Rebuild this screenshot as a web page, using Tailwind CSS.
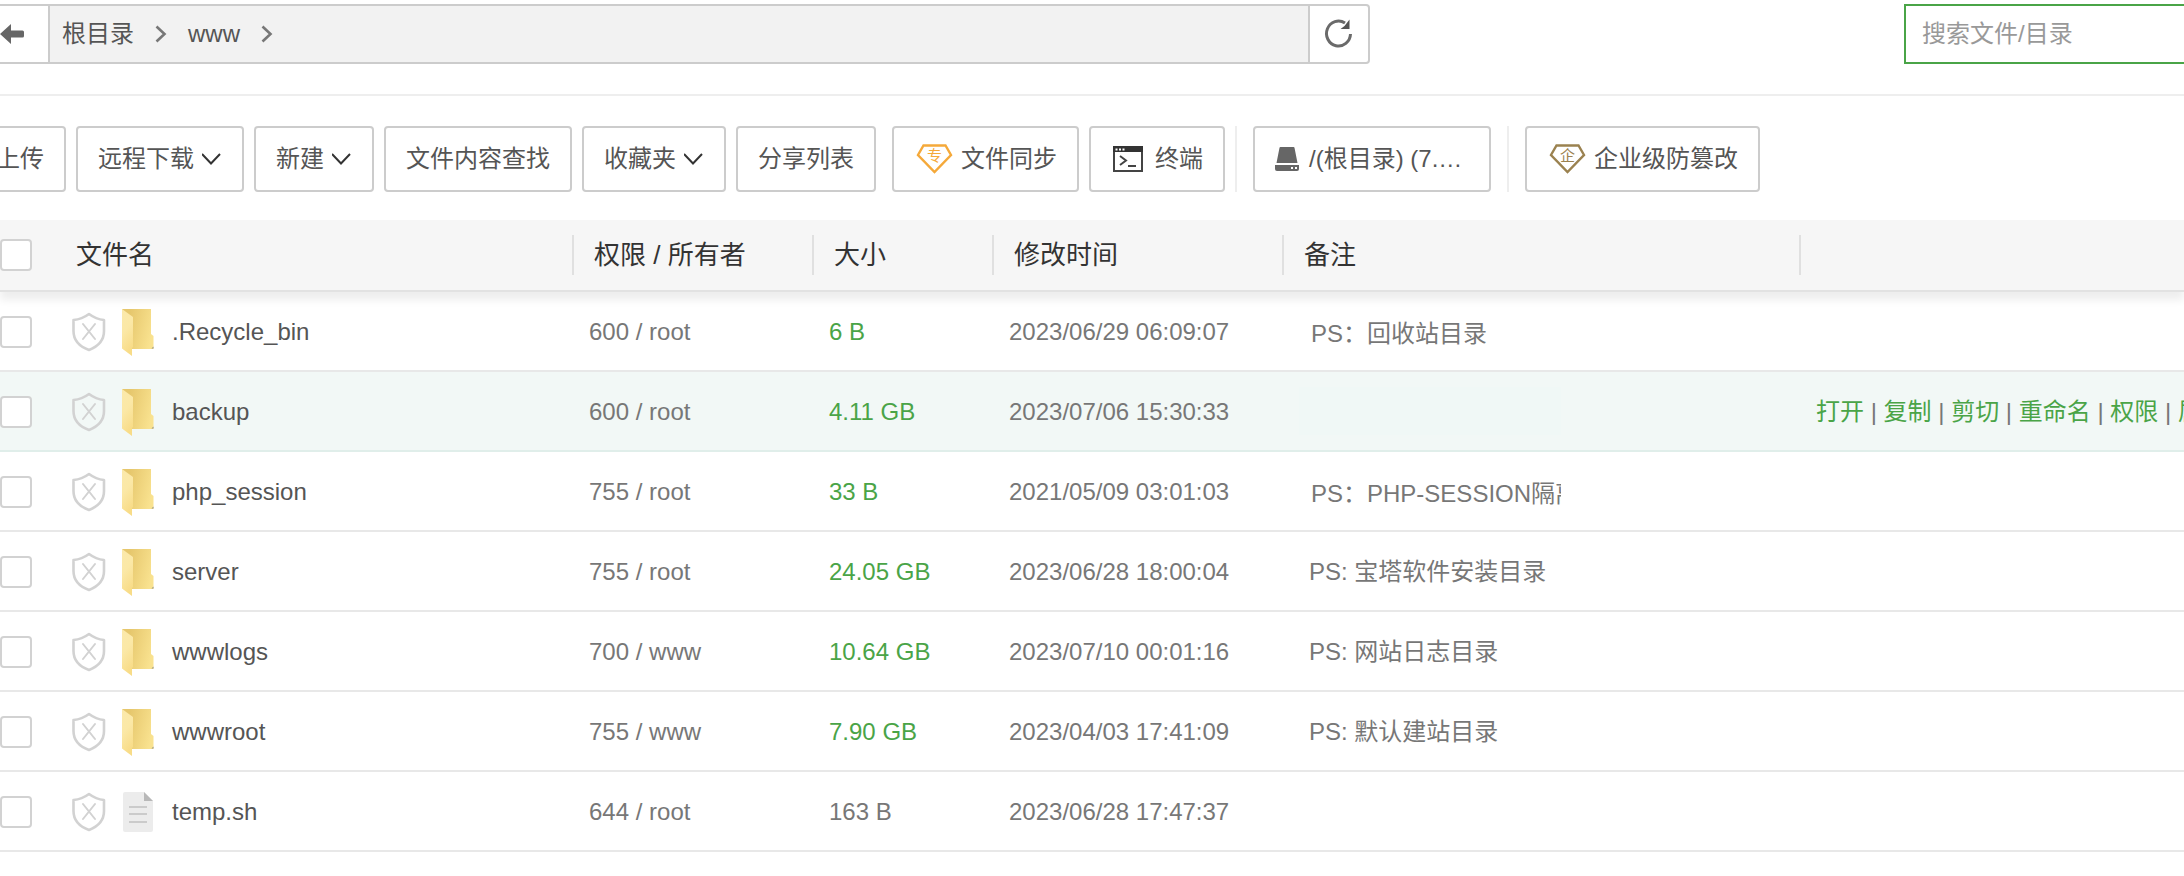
<!DOCTYPE html>
<html lang="zh-CN">

<head>
  <meta charset="UTF-8">
  <meta name="viewport" content="width=device-width, initial-scale=1.0">
  <title>文件管理</title>
  <script src="https://cdn.jsdelivr.net/npm/@tailwindcss/browser@4"></script>
</head>

<body class="overflow-x-hidden bg-white font-['Liberation_Sans','Noto_Sans_CJK_SC',sans-serif] text-2xl leading-8 text-[#555]">
  <!-- Shared icons -->
  <svg class="hidden" aria-hidden="true">
    <symbol id="icon-down" viewBox="0 0 20 12">
      <path d="M0 1l9 9.500L18 1" fill="none" stroke="#333" stroke-width="2" />
    </symbol>
    <symbol id="icon-next" viewBox="0 0 12 18">
      <path d="M1.500 1.500L9.500 9l-8 7.500" fill="none" stroke="#777" stroke-width="2.600" />
    </symbol>
    <symbol id="icon-shield" viewBox="0 0 34 40">
      <path d="M17 2C13 5 7.500 7.500 1.500 8v11c0 9 6 15.500 15.500 19 9-3.500 15-10 15-19V8C26.500 7.500 21 5 17 2z" fill="none" stroke="#d2d2d2" stroke-width="2.600" stroke-linejoin="round" />
      <path d="M11 12l12 15M23 12L11 27" fill="none" stroke="#d2d2d2" stroke-width="2" stroke-linecap="round" />
    </symbol>
    <symbol id="icon-folder" viewBox="0 0 34 48">
      <path d="M0 1h29v25l2.500 2v13H8z" fill="url(#folderBack)" />
      <path d="M0 1l11 8v30l-1 1v8L0 40.500z" fill="url(#folderFront)" />
      <path d="M29.500 40.500l2-2v2z" fill="#8d8d84" />
    </symbol>
    <symbol id="icon-file" viewBox="0 0 34 48">
      <path d="M3 4h19l9 9v29a2 2 0 0 1-2 2H3a2 2 0 0 1-2-2V6a2 2 0 0 1 2-2z" fill="#ececec" />
      <path d="M22 4l9 9h-9z" fill="#b8b8b8" />
      <path d="M7 19h18M7 26h18M7 34h18" stroke="#cbcbcb" stroke-width="2" />
    </symbol>
  </svg>
  <svg class="absolute size-0" aria-hidden="true">
    <defs>
      <linearGradient id="folderBack" x1="0" y1="0.200" x2="1" y2="0.500">
        <stop offset="0.200" stop-color="#e6c76d" />
        <stop offset="1" stop-color="#f9e28f" />
      </linearGradient>
      <linearGradient id="folderFront" x1="0" y1="0" x2="0.300" y2="1">
        <stop offset="0" stop-color="#fbe9ab" />
        <stop offset="0.500" stop-color="#fbe8a6" />
        <stop offset="1" stop-color="#f8dc88" />
      </linearGradient>
    </defs>
  </svg>

  <!-- Path bar and search -->
  <header class="flex justify-between border-b-2 border-[#eee] pt-1 pb-[30px]">
    <nav class="flex h-[60px] max-w-[1370px] flex-1 rounded-r border-2 border-l-0 border-[#ccc]" aria-label="路径">
      <button type="button" class="w-[50px] border-r-2 border-[#ccc]" aria-label="返回上一级">
        <svg class="h-5 w-6" viewBox="0 0 24 20">
          <path d="M0 10L11 0v6.500h11.500a1.500 1.500 0 0 1 1.500 1.500v4a1.500 1.500 0 0 1-1.500 1.500H11V20z" fill="#666" />
        </svg>
      </button>
      <div class="flex flex-1 items-center gap-[21px] bg-[#f2f2f2] pl-3">
        <a href="#">根目录</a>
        <svg class="h-[18px] w-3"><use href="#icon-next" /></svg>
        <a href="#">www</a>
        <svg class="h-[18px] w-3"><use href="#icon-next" /></svg>
      </div>
      <button type="button" class="flex w-[60px] items-center justify-center border-l-2 border-[#ccc]" aria-label="刷新">
        <svg class="size-8" viewBox="0 0 32 32">
          <path d="M22 5A12 12.500 0 1 0 27.500 16" fill="none" stroke="#6a6a6a" stroke-width="3" />
          <path d="M26.500 1.500v9.500h-9l4-3z" fill="#555" />
        </svg>
      </button>
    </nav>
    <input type="search" placeholder="搜索文件/目录" aria-label="搜索文件/目录" class="h-[60px] w-[280px] border-2 border-r-0 border-[#4aa447] px-4 outline-none placeholder:text-[#999]">
  </header>

  <!-- Toolbar -->
  <div class="-ml-[26px] flex gap-2.5 pt-[30px] pb-7 whitespace-nowrap">
    <button type="button" class="h-[66px] rounded border-2 border-[#ccc] px-5">上传</button>
    <button type="button" class="flex h-[66px] items-center gap-2 rounded border-2 border-[#ccc] px-5">远程下载<svg class="h-3 w-5"><use href="#icon-down" /></svg></button>
    <button type="button" class="flex h-[66px] items-center gap-2 rounded border-2 border-[#ccc] px-5">新建<svg class="h-3 w-5"><use href="#icon-down" /></svg></button>
    <button type="button" class="h-[66px] rounded border-2 border-[#ccc] px-5">文件内容查找</button>
    <button type="button" class="flex h-[66px] items-center gap-2 rounded border-2 border-[#ccc] px-5">收藏夹<svg class="h-3 w-5"><use href="#icon-down" /></svg></button>
    <button type="button" class="h-[66px] rounded border-2 border-[#ccc] px-5">分享列表</button>
    <button type="button" class="ml-1.5 flex h-[66px] items-center gap-2 rounded border-2 border-[#ccc] px-5">
      <svg class="h-[30px] w-[39px]" viewBox="0 0 39 30">
        <path d="M9.500 1.500h22L37 11 20.500 28 4 11z" fill="none" stroke="#f5a93a" stroke-width="2.400" />
        <text x="20.500" y="17" text-anchor="middle" font-size="15" fill="#f5a93a">专</text>
      </svg>
      文件同步
    </button>
    <button type="button" class="flex h-[66px] items-center gap-2 rounded border-2 border-[#ccc] px-5">
      <svg class="h-[26px] w-9" viewBox="0 0 36 26">
        <path d="M3 1h28v24H3z" fill="none" stroke="#444" stroke-width="2" />
        <path d="M2 0h30v6H2z" fill="#333" />
        <path d="M4.500 3.500h2m1.500 0h2m1.500 0h2" stroke="#fff" stroke-width="2" />
        <path d="M9 10l6 4.500L9 19M17 20h8" fill="none" stroke="#444" stroke-width="2" />
      </svg>
      终端
    </button>
    <div class="w-0.5 bg-[#eee]"></div>
    <button type="button" class="ml-1.5 flex h-[66px] w-[238px] items-center gap-2.5 rounded border-2 border-[#ccc] px-5">
      <svg class="h-6 w-6" viewBox="0 0 24 24">
        <path d="M5.500 0h13a1 1 0 0 1 1 .8L22.500 16h-21L4.500.8a1 1 0 0 1 1-.8z" fill="#666" />
        <path d="M0 18h24v4a2 2 0 0 1-2 2H2a2 2 0 0 1-2-2z" fill="#666" />
        <path d="M16 20h2v2h-2zM20 20h2v2h-2z" fill="#fff" />
      </svg>
      /(根目录) (7.…
    </button>
    <div class="ml-1.5 w-0.5 bg-[#eee]"></div>
    <button type="button" class="ml-1.5 flex h-[66px] items-center gap-2 rounded border-2 border-[#ccc] px-5">
      <svg class="h-[30px] w-[39px]" viewBox="0 0 39 30">
        <path d="M9.500 1.500h22L37 11 20.500 28 4 11z" fill="none" stroke="#9b8250" stroke-width="2.400" />
        <text x="20.500" y="17" text-anchor="middle" font-size="15" fill="#9b8250">企</text>
      </svg>
      企业级防篡改
    </button>
  </div>

  <!-- File list -->
  <table class="w-full table-fixed border-separate border-spacing-0 whitespace-nowrap">
    <colgroup>
      <col class="w-[72px]">
      <col class="w-[502px]">
      <col class="w-[240px]">
      <col class="w-[180px]">
      <col class="w-[290px]">
      <col class="w-[517px]">
      <col>
    </colgroup>
    <thead class="bg-[#f6f6f6] text-left text-[26px] text-[#333] shadow-[0_8px_8px_rgba(0,0,0,0.07)]">
      <tr class="h-[72px]">
        <th class="border-b-2 border-[#e2e2e2] font-normal">
          <input type="checkbox" aria-label="全选" class="block size-8 appearance-none rounded border-2 border-[#d2d2d2] bg-white">
        </th>
        <th class="border-b-2 border-[#e2e2e2] font-normal">
          <div class="h-10 border-r-2 border-[#e0e0e0] pl-1 leading-10">文件名</div>
        </th>
        <th class="border-b-2 border-[#e2e2e2] font-normal">
          <div class="h-10 border-r-2 border-[#e0e0e0] pl-5 leading-10">权限 / 所有者</div>
        </th>
        <th class="border-b-2 border-[#e2e2e2] font-normal">
          <div class="h-10 border-r-2 border-[#e0e0e0] pl-5 leading-10">大小</div>
        </th>
        <th class="border-b-2 border-[#e2e2e2] font-normal">
          <div class="h-10 border-r-2 border-[#e0e0e0] pl-5 leading-10">修改时间</div>
        </th>
        <th class="border-b-2 border-[#e2e2e2] font-normal">
          <div class="h-10 border-r-2 border-[#e0e0e0] pl-5 leading-10">备注</div>
        </th>
        <th class="border-b-2 border-[#e2e2e2]"></th>
      </tr>
    </thead>
    <tbody id="fileList" class="text-[#777]"></tbody>
  </table>

  <script>
    const files = [
      { name: '.Recycle_bin', icon: 'folder', access: '600 / root', size: '6 B', time: '2023/06/29 06:09:07', note: 'PS：回收站目录', editable: true },
      { name: 'backup', icon: 'folder', access: '600 / root', size: '4.11 GB', time: '2023/07/06 15:30:33', note: '', editable: true, active: true },
      { name: 'php_session', icon: 'folder', access: '755 / root', size: '33 B', time: '2021/05/09 03:01:03', note: 'PS：PHP-SESSION隔离', editable: true },
      { name: 'server', icon: 'folder', access: '755 / root', size: '24.05 GB', time: '2023/06/28 18:00:04', note: 'PS: 宝塔软件安装目录' },
      { name: 'wwwlogs', icon: 'folder', access: '700 / www', size: '10.64 GB', time: '2023/07/10 00:01:16', note: 'PS: 网站日志目录' },
      { name: 'wwwroot', icon: 'folder', access: '755 / www', size: '7.90 GB', time: '2023/04/03 17:41:09', note: 'PS: 默认建站目录' },
      { name: 'temp.sh', icon: 'file', access: '644 / root', size: '163 B', time: '2023/06/28 17:47:37', note: '' },
    ];
    const actions = ['打开', '复制', '剪切', '重命名', '权限', '属性'];

    // Folders show a green, clickable size; plain files show grey text
    function sizeCell(file) {
      return file.icon === 'folder' ? `<a href="#" class="text-[#4aa447]">${file.size}</a>` : file.size;
    }

    function noteCell(file) {
      if (file.editable) {
        const bg = file.active ? 'bg-[#f0f8f6]' : 'bg-transparent';
        return `<input type="text" value="${file.note}" aria-label="${file.name} 备注" class="block h-12 w-[262px] pl-3 ${bg}">`;
      }
      return `<span class="pl-2.5">${file.note}</span>`;
    }

    function actionCell(file) {
      if (!file.active) return '';
      return actions.map(action => `<a href="#" class="text-[#4aa447]">${action}</a>`).join(' | ');
    }

    document.getElementById('fileList').innerHTML = files.map(file => {
      const border = file.active ? 'border-[#e0eeea]' : 'border-[#e8e8e8]';
      // The note field sits on the row's centre line, the other cells slightly under it
      const notePad = file.editable ? 'pt-0' : 'pt-0.5';
      return `
        <tr class="h-20 ${file.active ? 'bg-[#f2f8f6]' : ''}">
          <td class="border-b-2 pt-0.5 ${border}">
            <input type="checkbox" aria-label="${file.name}" class="block size-8 appearance-none rounded border-2 border-[#d2d2d2] bg-white">
          </td>
          <td class="border-b-2 pt-0.5 ${border}">
            <div class="flex items-center">
              <svg class="h-10 w-[34px]"><use href="#icon-shield" /></svg>
              <svg class="ml-4 h-12 w-[34px]"><use href="#icon-${file.icon}" /></svg>
              <a href="#" class="ml-4 text-[#555]">${file.name}</a>
            </div>
          </td>
          <td class="border-b-2 pt-0.5 ${border} pl-[15px]">${file.access}</td>
          <td class="border-b-2 pt-0.5 ${border} pl-[15px]">${sizeCell(file)}</td>
          <td class="border-b-2 pt-0.5 ${border} pl-[15px]">${file.time}</td>
          <td class="border-b-2 ${notePad} ${border} pl-[15px]">${noteCell(file)}</td>
          <td class="overflow-hidden border-b-2 pt-0.5 ${border} pl-[15px]">${actionCell(file)}</td>
        </tr>`;
    }).join('');
  </script>
</body>

</html>
